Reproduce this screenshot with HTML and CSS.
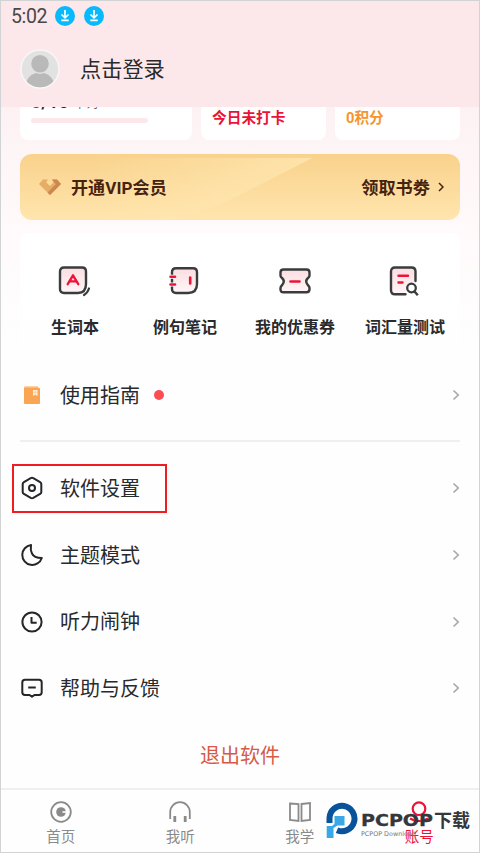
FILE: index.html
```html
<!DOCTYPE html>
<html lang="zh-CN">
<head>
<meta charset="utf-8">
<title>账号</title>
<link rel="stylesheet" href="styles.css">
</head>
<body>
<div class="screen">
  <header class="header">
    <div class="status">
      <span class="time">5:02</span>
      <svg class="dl" viewBox="0 0 20 20"><circle cx="10" cy="10" r="10" fill="#08b9fc"/><path d="M10 4v7.500M6.500 8.500l3.500 3.400 3.500-3.400M6.300 14.300h7.400" fill="none" stroke="#fff" stroke-width="1.700"/></svg>
      <svg class="dl" viewBox="0 0 20 20"><circle cx="10" cy="10" r="10" fill="#08b9fc"/><path d="M10 4v7.500M6.500 8.500l3.500 3.400 3.500-3.400M6.300 14.300h7.400" fill="none" stroke="#fff" stroke-width="1.700"/></svg>
    </div>
    <div class="profile">
      <svg class="avatar" viewBox="0 0 40 40"><defs><clipPath id="face"><circle cx="20" cy="20" r="18.3"/></clipPath></defs><circle cx="20" cy="20" r="19.7" fill="#f8f8f8"/><circle cx="20" cy="20" r="18.3" fill="#e2e2e2"/><g clip-path="url(#face)"><ellipse cx="20" cy="36" rx="14" ry="12.5" fill="#b9b9b9"/><circle cx="20" cy="15" r="10" fill="#e2e2e2"/><circle cx="20" cy="14.8" r="8.8" fill="#b9b9b9"/></g></svg>
      <span class="login">点击登录</span>
    </div>
  </header>

  <section class="stats">
    <div class="stat progress"><div class="count"><b>0</b>/10<small>单词</small></div><div class="bar"></div></div>
    <div class="stat checkin">今日未打卡</div>
    <div class="stat points">0积分</div>
  </section>

  <section class="vip">
    <svg class="shine" viewBox="0 0 441 66" preserveAspectRatio="none"><defs><linearGradient id="sh"><stop offset=".2" stop-color="#ffe8b3" stop-opacity="0"/><stop offset="1" stop-color="#ffe8b3" stop-opacity=".75"/></linearGradient></defs><path d="M50 4H293L220 41Q190 57 150 66H20Z" fill="url(#sh)"/></svg>
    <svg class="gem" viewBox="0 0 22 16"><path d="M4 .5h5L7.200 3.200 11 7l3.800-3.800L13 .5h5L22 5 11 16 0 5Z" fill="#e5ad65"/><path d="M13 .5h5L22 5 11 16 8.500 13.500 17 5 14.800 3.200Z" fill="#cd8851"/></svg>
    <span class="vip-name">开通VIP会员</span>
    <span class="vip-action">领取书劵</span>
    <svg class="vip-arrow" viewBox="0 0 6 10"><path d="M1 1l4 4-4 4" fill="none" stroke="#46220f" stroke-width="1.5"/></svg>
  </section>

  <section class="tools">
    <div class="tool">
      <svg viewBox="0 0 34 34"><defs><linearGradient id="pk" x2="0" y2="1"><stop stop-color="#fbdde1"/><stop offset="1" stop-color="#fff6f7"/></linearGradient></defs><path d="M6 3.500h18q4 0 4 4V20q0 9-8 9H6q-4 0-4-4V7.500q0-4 4-4Z" fill="url(#pk)" stroke="#393b3d" stroke-width="2.400"/><path d="M9.700 20.200 15 11.300l5.300 8.900M12 17.300h6" fill="none" stroke="#ef1238" stroke-width="2.300" stroke-linecap="round" stroke-linejoin="round"/><path d="M31 24.500q-1.500 4.500-5 6.500" fill="none" stroke="#393b3d" stroke-width="2.200" stroke-linecap="round"/></svg>
      <span>生词本</span>
    </div>
    <div class="tool">
      <svg viewBox="0 0 34 34"><path d="M8 4.200h17q4 0 4 4V20q0 9-9 9H8q-4 0-4-4V8.200q0-4 4-4Z" fill="url(#pk)" stroke="#393b3d" stroke-width="2.400"/><path d="M2 12.700h4.500M2 20.500h4.500" stroke="#fff" stroke-width="4"/><path d="M2.500 12.700H7M2.500 20.500H7M22.200 13.500v6" fill="none" stroke="#ef1238" stroke-width="2.600" stroke-linecap="round"/></svg>
      <span>例句笔记</span>
    </div>
    <div class="tool">
      <svg viewBox="0 0 34 34"><path d="M5.500 5.500h23q3 0 3 3v3q0 1.500-1.500 2.500-3.500 3-.2 7 1.700 1.500 1.700 3v1.300q0 3-3 3h-23q-3 0-3-3V24q0-1.500 1.700-3 3.300-4-.2-7-1.500-1-1.500-2.500v-3q0-3 3-3Z" fill="url(#pk)" stroke="#393b3d" stroke-width="2.400"/><path d="M12.500 17.500h9" stroke="#ef1238" stroke-width="2.600" stroke-linecap="round"/></svg>
      <span>我的优惠券</span>
    </div>
    <div class="tool">
      <svg viewBox="0 0 34 34"><path d="M17 30.500H7q-4 0-4-4v-19q0-4 4-4h16q4 0 4 4V17l-8 4Z" fill="url(#pk)"/><path d="M17.500 30.300H7q-4 0-4-4V7.500q0-4 4-4h16.500q4 0 4 4V17" fill="none" stroke="#393b3d" stroke-width="2.400" stroke-linecap="round"/><path d="M10.500 11.700h9.500M10.500 18.500h4" stroke="#ef1238" stroke-width="2.500" stroke-linecap="round"/><circle cx="23.500" cy="24" r="4.300" fill="#fff" stroke="#393b3d" stroke-width="2.300"/><path d="M26.500 27.500l3.300 3.800" stroke="#393b3d" stroke-width="2.400"/></svg>
      <span>词汇量测试</span>
    </div>
  </section>

  <main class="menu">
    <div class="row guide">
      <svg class="icon" viewBox="0 0 24 24"><path d="M4 4.500Q4 3 5.500 3H18v3H4Z" fill="#ffd0a0"/><path d="M4 4.500h14.500l1.500 1V20q0 1-1 1H5q-1 0-1-1Z" fill="#faa554"/><path d="M13 7h4.500v6l-2.200-1.200L13 13Z" fill="#fff0dc"/><path d="M15.200 7v5M13 9.200h4.500" stroke="#ffc58a" stroke-width=".7"/></svg>
      <span>使用指南</span><i class="dot"></i>
      <svg class="chev" viewBox="0 0 8 12"><path d="M1.500 1.500 6.200 6l-4.700 4.500" fill="none" stroke="#a9a9a9" stroke-width="1.700"/></svg>
    </div>
    <hr class="divider">
    <div class="row">
      <svg class="icon" viewBox="0 0 24 24"><path d="M12 1.800q.7 0 1.300.4l6.800 3.900q1.200.7 1.200 2v7.800q0 1.300-1.200 2l-6.800 3.900q-1.300.7-2.600 0l-6.800-3.900q-1.200-.7-1.200-2V8.100q0-1.300 1.200-2l6.800-3.900Q11.300 1.800 12 1.800Z"/><circle cx="12" cy="12" r="3"/></svg>
      <span class="highlight">软件设置</span>
      <svg class="chev" viewBox="0 0 8 12"><path d="M1.500 1.500 6.200 6l-4.700 4.500" fill="none" stroke="#a9a9a9" stroke-width="1.700"/></svg>
    </div>
    <div class="row">
      <svg class="icon" viewBox="0 0 24 24"><path d="M11 2A10 10 0 1 0 21.800 15Q14 15 12 10.500 10.200 7 11 2Z"/></svg>
      <span>主题模式</span>
      <svg class="chev" viewBox="0 0 8 12"><path d="M1.500 1.500 6.200 6l-4.700 4.500" fill="none" stroke="#a9a9a9" stroke-width="1.700"/></svg>
    </div>
    <div class="row">
      <svg class="icon" viewBox="0 0 24 24"><circle cx="12" cy="12" r="9.600"/><path d="M11.500 7v5.700h5.200"/></svg>
      <span>听力闹钟</span>
      <svg class="chev" viewBox="0 0 8 12"><path d="M1.500 1.500 6.200 6l-4.700 4.500" fill="none" stroke="#a9a9a9" stroke-width="1.700"/></svg>
    </div>
    <div class="row">
      <svg class="icon" viewBox="0 0 24 24"><path d="M5 3.700h14q2.700 0 2.700 2.700v9.900q0 2.700-2.700 2.700h-4.500L12 20.700 9.500 19H5q-2.700 0-2.700-2.700V6.400q0-2.700 2.700-2.700ZM8.200 11.500h7.600"/></svg>
      <span>帮助与反馈</span>
      <svg class="chev" viewBox="0 0 8 12"><path d="M1.500 1.500 6.200 6l-4.700 4.500" fill="none" stroke="#a9a9a9" stroke-width="1.700"/></svg>
    </div>
    <div class="logout">退出软件</div>
  </main>

  <nav class="nav">
    <div class="tab"><svg viewBox="0 0 24 24"><circle cx="12" cy="12" r="9.800"/><circle cx="12" cy="12" r="4.800" fill="#8a8a8a" stroke="none"/><path d="M13.500 12H17" stroke="#fff" stroke-width="1.600"/></svg><span>首页</span></div>
    <div class="tab"><svg viewBox="0 0 24 24"><path d="M2.200 19v-7a9.800 9.800 0 0 1 19.600 0v7"/><path d="M6.800 16v6M17.200 16v6" stroke-width="2.800"/></svg><span>我听</span></div>
    <div class="tab"><svg viewBox="0 0 24 24"><path d="M2 3.500 10.500 4v17L2 20ZM13.500 4 22 3v17l-8.500 1Z"/></svg><span>我学</span></div>
    <div class="tab active"><svg viewBox="0 0 24 24"><circle cx="12" cy="8.700" r="6.300"/><path d="M3 18.500q4 2.500 9 2.500t9-2.500"/></svg><span>账号</span></div>
  </nav>

  <div class="watermark">
    <svg viewBox="0 0 32 36"><path d="M3.500 21V16A12.500 12.700 0 1 1 11 28.200" fill="none" stroke="#09539a" stroke-width="6"/><path d="M8.500 14h10v9.500h-7L7.500 26v10H.7V24H6l2.500-2Z" fill="#3aa8e6"/></svg>
    <div class="brand"><svg class="brand-name" viewBox="0 0 73 15"><text x="0" y="13" textLength="72" lengthAdjust="spacingAndGlyphs">PCPOP</text></svg><span class="brand-cn">下载</span><small>PCPOP Download</small></div>
  </div>
</div>
</body>
</html>
```
FILE: styles.css
```css
* { box-sizing: border-box; }
body {
  margin: 0;
  font-family: Roboto, "Noto Sans CJK SC", sans-serif;
  color: #282a2c;
}
svg { display: block; flex: none; }
.screen {
  position: relative;
  display: flex;
  flex-direction: column;
  width: 480px;
  height: 853px;
  border: 1px solid #d2d3d5;
  overflow: hidden;
  background: linear-gradient(#fdf2f3 106px, #fffafb 240px, #fefefe 350px);
}
.header { height: 106px; flex: none; background: #fce8ea; }
.status { display: flex; align-items: center; height: 30px; padding-left: 10px; }
.time { width: 44px; font-size: 19.500px; line-height: 30px; color: #4a4749; letter-spacing: -.4px; padding-top: 2px; }
.dl { width: 20px; height: 20px; margin-right: 9px; }
.profile { display: flex; align-items: center; gap: 20px; height: 40px; margin: 18px 0 0 19px; }
.avatar { width: 40px; height: 40px; }
.login { font-size: 21.200px; line-height: 30px; padding-top: 2px; }

.stats { display: grid; grid-template-columns: 172px 125px 125px; grid-template-rows: 33px; gap: 9px; height: 33px; flex: none; margin: 0 19px; overflow: hidden; }
.stat { height: 33px; background: #fff; border-radius: 0 0 8px 8px; font-size: 14.700px; font-weight: 700; line-height: 20px; padding: 1px 11px 0; }
.progress { padding: 0 11px; }
.count { display: flex; align-items: baseline; font-size: 18px; line-height: 22px; height: 22px; margin: -16px 0 5px; }
.count b { color: #ea1238; }
.count small { font-size: 12px; font-weight: 400; color: #666; margin-left: 5px; }
.bar { width: 117px; height: 5px; border-radius: 3px; background: #fce8ea; }
.checkin { color: #ea1238; }
.points { color: #f6952c; }

.vip { position: relative; display: flex; align-items: center; flex: none; height: 66px; margin: 13.500px 19px 0; padding: 0 16px 0 19px; border-radius: 12px; background: linear-gradient(#f9d28c, #ffe5ad); overflow: hidden; color: #46220f; font-size: 17px; font-weight: 700; }
.shine { position: absolute; inset: 0; width: 100%; height: 100%; }
.gem { position: relative; width: 22px; height: 16px; margin-right: 10px; }
.vip-name { position: relative; letter-spacing: .1px; }
.vip-action { margin-left: auto; font-size: 17.200px; }
.vip-name, .vip-action { padding-bottom: 1px; }
.vip-arrow { width: 6px; height: 10px; margin-left: 8px; }

.tools { display: grid; grid-template-columns: repeat(4, 1fr); flex: none; height: 119px; margin: 13.500px 19px 0; padding-top: 31px; border-radius: 8px; background: linear-gradient(#fff, #fefefe); }
.tool { display: flex; flex-direction: column; align-items: center; font-size: 16px; font-weight: 700; line-height: 24px; white-space: nowrap; }
.tool svg { width: 34px; height: 34px; margin-bottom: 18px; }

.menu { flex: 1; padding: 0 19px; }
.row { display: flex; align-items: center; height: 66.700px; font-size: 20px; line-height: 30px; }
.guide { height: 84px; margin-top: 1px; }
.icon { width: 24px; height: 24px; margin-right: 16px; fill: none; stroke: #242628; stroke-width: 2; stroke-linejoin: round; }
.guide .icon { stroke: none; }
.chev { width: 8px; height: 12px; margin-left: auto; }
.dot { width: 10px; height: 10px; margin-left: 14px; border-radius: 50%; background: #fb4d54; }
.divider { height: 2px; margin: 3px 0 13px; border: 0; background: #efefef; }
.row span { padding-top: 1px; }
.highlight { position: relative; }
.highlight::before { content: ""; position: absolute; left: -48px; top: -9px; width: 155px; height: 49px; border: 2px solid #ef1d20; box-sizing: border-box; }
.logout { height: 66px; line-height: 68px; text-align: center; font-size: 20px; color: #d65a45; }

.nav { display: grid; grid-template-columns: repeat(4, 1fr); flex: none; height: 65px; border-top: 2px solid #efefef; padding-top: 10px; }
.tab { display: flex; flex-direction: column; align-items: center; gap: 3px; font-size: 14.500px; line-height: 22px; color: #8a8a8a; }
.tab svg { width: 24px; height: 24px; fill: none; stroke: currentColor; stroke-width: 1.800; }
.active { color: #ef1238; }
.tab.active svg { stroke-width: 2.200; }

.watermark { position: absolute; left: 325px; top: 801px; display: flex; gap: 3px; }
.watermark > svg { width: 32px; height: 36px; }
.brand { display: grid; grid-template-columns: 73px 38px; align-content: start; color: #35373a; padding-top: 4px; }
.brand-name { width: 73px; height: 15px; margin-top: 7px; font: bold 15.500px "DejaVu Sans", sans-serif; fill: #35373a; stroke: #35373a; stroke-width: .3; }
.brand-cn { font-size: 18px; font-weight: 700; line-height: 30px; }
.brand small { font: 6.400px/7px "DejaVu Sans", sans-serif; margin-top: -5px; white-space: nowrap; color: #777; }
```
